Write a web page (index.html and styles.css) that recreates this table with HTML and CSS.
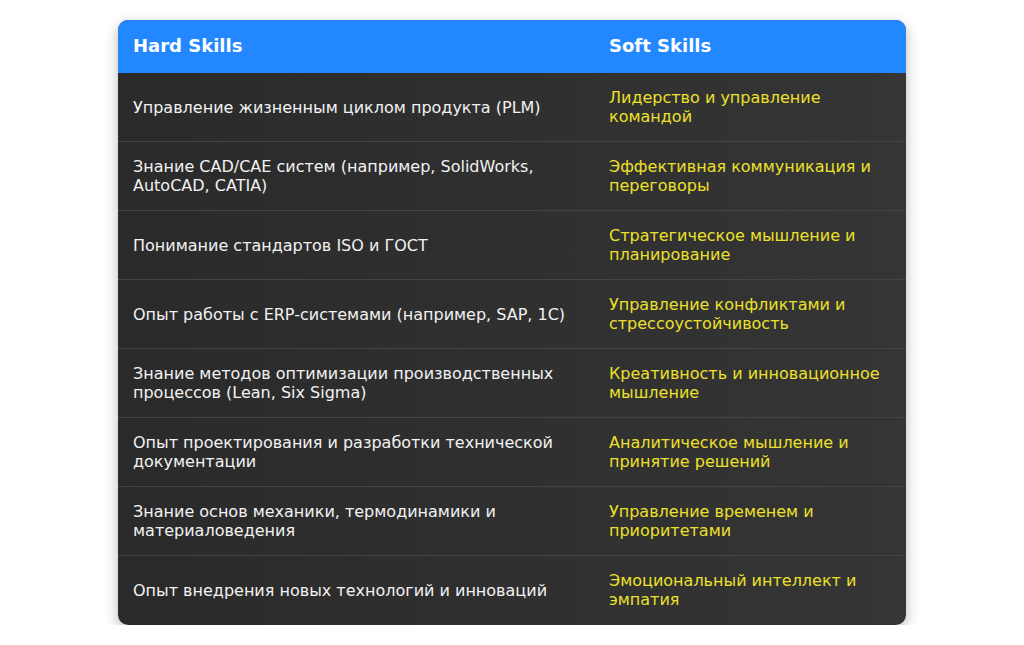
FILE: index.html
```html
<!DOCTYPE html>
<html lang="ru">
<head>
<meta charset="utf-8">
<title>Hard Skills / Soft Skills</title>
<link rel="stylesheet" href="styles.css">
</head>
<body>
<div class="card">
  <table class="skills">
    <thead>
      <tr><th class="col-hard">Hard Skills</th><th class="col-soft">Soft Skills</th></tr>
    </thead>
    <tbody>
      <tr><td>Управление жизненным циклом продукта (PLM)</td><td class="soft">Лидерство и управление командой</td></tr>
      <tr><td>Знание CAD/CAE систем (например, SolidWorks, AutoCAD, CATIA)</td><td class="soft">Эффективная коммуникация и переговоры</td></tr>
      <tr><td>Понимание стандартов ISO и ГОСТ</td><td class="soft">Стратегическое мышление и планирование</td></tr>
      <tr><td>Опыт работы с ERP-системами (например, SAP, 1С)</td><td class="soft">Управление конфликтами и стрессоустойчивость</td></tr>
      <tr><td>Знание методов оптимизации производственных процессов (Lean, Six Sigma)</td><td class="soft">Креативность и инновационное мышление</td></tr>
      <tr><td>Опыт проектирования и разработки технической документации</td><td class="soft">Аналитическое мышление и принятие решений</td></tr>
      <tr><td>Знание основ механики, термодинамики и материаловедения</td><td class="soft">Управление временем и приоритетами</td></tr>
      <tr><td>Опыт внедрения новых технологий и инноваций</td><td class="soft">Эмоциональный интеллект и эмпатия</td></tr>
    </tbody>
  </table>
</div>
</body>
</html>
```
FILE: styles.css
```css
html, body {
  margin: 0;
  padding: 0;
  background: #ffffff;
}
body {
  font-family: "DejaVu Sans", sans-serif;
  padding-top: 20px;
}
.card {
  width: 788px;
  margin: 0 auto;
  border-radius: 10px;
  overflow: hidden;
  background: linear-gradient(90deg, #2a2a2a 0%, #353535 100%);
  box-shadow: 0 4px 14px rgba(0, 0, 0, 0.28);
}
.skills {
  width: 100%;
  border-collapse: collapse;
  table-layout: fixed;
}
.skills th {
  background: #2388ff;
  color: #ffffff;
  font-size: 18px;
  font-weight: bold;
  line-height: 23px;
  text-align: left;
  padding: 14px 15px 16px;
}
.col-hard { width: 446px; }
.skills td {
  font-size: 16px;
  line-height: 19px;
  padding: 15px 15px;
  height: 38px;
  color: #f2f2f2;
  vertical-align: middle;
  border-bottom: 1px solid #444444;
}
.skills tbody tr:last-child td {
  border-bottom: none;
  padding-bottom: 16px;
}
.skills td.soft {
  color: #ece02a;
}
```
